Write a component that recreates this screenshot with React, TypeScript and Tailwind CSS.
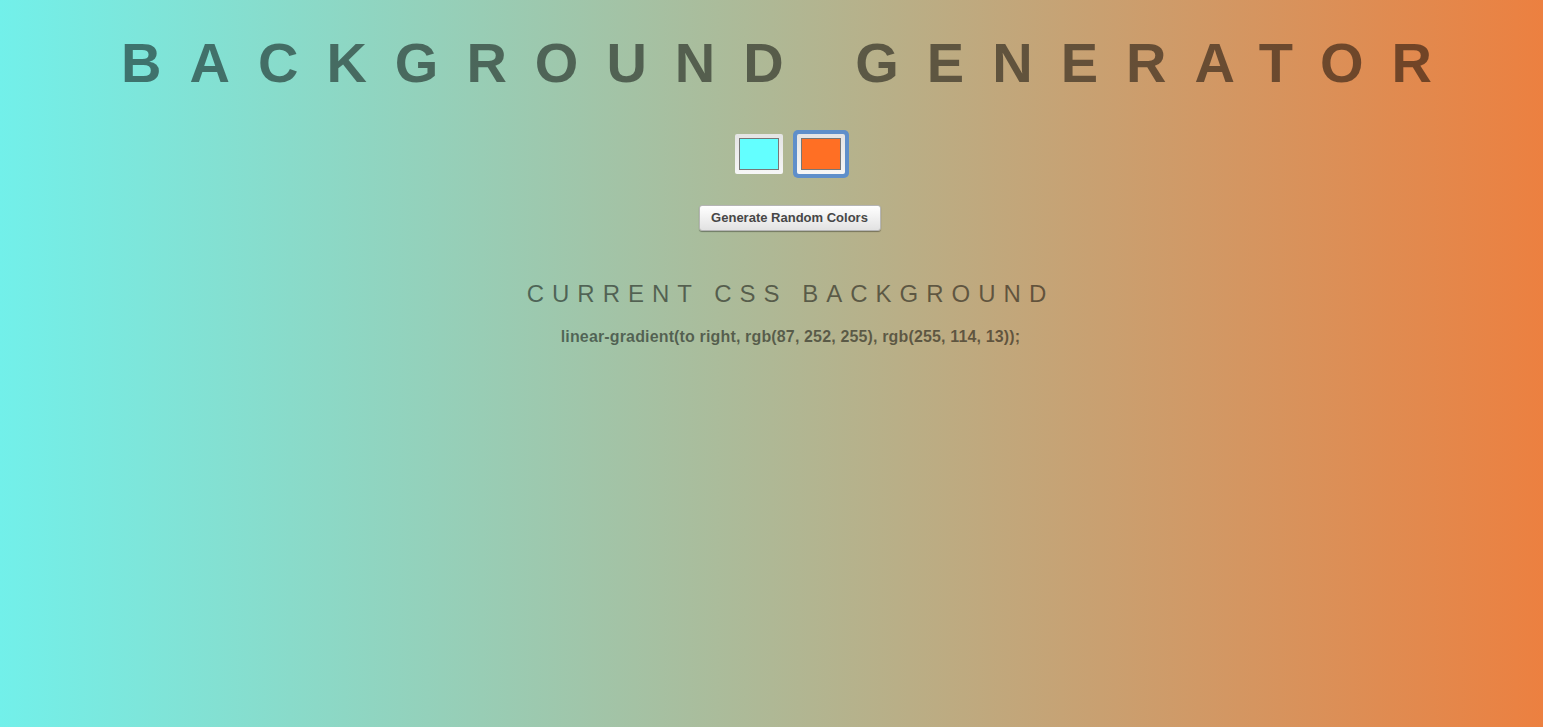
import React, { useState } from 'react';

const randomHex = () =>
  '#' +
  Math.floor(Math.random() * 0xffffff)
    .toString(16)
    .padStart(6, '0');

interface SwatchProps {
  color: string;
  focused?: boolean;
}

const Swatch: React.FC<SwatchProps> = ({ color, focused }) => {
  const box = (
    <div className="w-[48px] h-[40px] p-[4px] bg-gradient-to-b from-[#e4e4e4] to-[#f6f6f6] rounded-[2px]">
      <div className="w-full h-full border border-[#777777]" style={{ backgroundColor: color }} />
    </div>
  );
  if (!focused) return box;
  return <div className="p-[4px] rounded-[5px] bg-[#5f8fca]">{box}</div>;
};

const App: React.FC = () => {
  const [left, setLeft] = useState('#63ffff');
  const [right, setRight] = useState('#ff6f24');

  const handleRandom = () => {
    setLeft(randomHex());
    setRight(randomHex());
  };

  return (
    <div
      className="min-h-[727px] w-full bg-linear-to-r/srgb from-[#72f0ea] to-[#ec8040] flex flex-col items-center pl-[38px]"
      style={{ fontFamily: '"Liberation Sans", Arial, sans-serif' }}
    >
      <h1 className="mt-[31px] leading-[64px] text-[56px] font-bold tracking-[0.5em] uppercase text-black/50 whitespace-nowrap">
        Background Generator
      </h1>

      <div className="mt-[35px] flex items-center gap-[10px] pl-[3px]">
        <Swatch color={left} />
        <Swatch color={right} focused />
      </div>

      <button
        onClick={handleRandom}
        className="mt-[27px] mr-[2px] h-[26px] w-[182px] text-[13px] font-bold text-[#474747] bg-gradient-to-b from-white to-[#e2e2e2] border border-[#b5b5b5] rounded-[3px] shadow-[0_1px_1px_rgba(0,0,0,0.35)]"
      >
        Generate Random Colors
      </button>

      <h3 className="mt-[49px] leading-[28px] text-[24px] font-normal tracking-[8px] uppercase text-black/50 whitespace-nowrap">
        Current CSS Background
      </h3>

      <p className="mt-[20px] leading-[18px] text-[16px] font-bold tracking-[0.15px] text-black/50">
        linear-gradient(to right, rgb(87, 252, 255), rgb(255, 114, 13));
      </p>
    </div>
  );
};

export default App;
